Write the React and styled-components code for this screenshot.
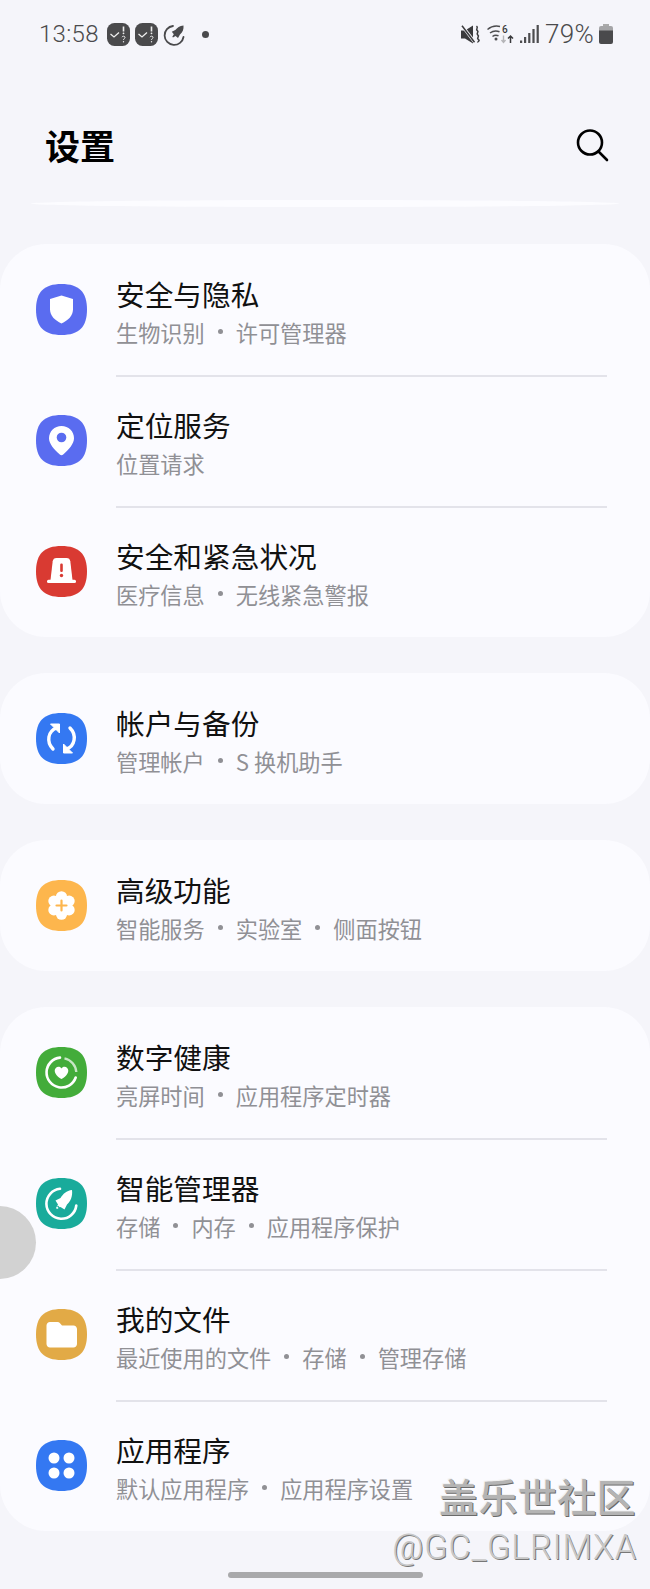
import React from 'react';
import styled, { createGlobalStyle } from 'styled-components';

const GlobalStyle = createGlobalStyle`
  html, body {
    margin: 0;
    padding: 0;
    background: #f5f5fa;
  }
`;

const CJK = `"Noto Sans CJK SC", "Noto Sans", sans-serif`;

const Screen = styled.div`
  position: relative;
  width: 650px;
  height: 1589px;
  overflow: hidden;
  background: #f5f5fa;
  font-family: ${CJK};
`;

const StatusBar = styled.div`
  height: 68px;
  display: flex;
  align-items: center;
  justify-content: space-between;
  padding: 0 37px 0 39px;
  box-sizing: border-box;
  color: #4a4a4c;
  font-family: Roboto, sans-serif;
`;

const StatusGroup = styled.div`
  display: flex;
  align-items: center;
  gap: ${(p) => p.$gap}px;
`;

const StatusText = styled.span`
  font-size: ${(p) => p.$size}px;
  font-weight: 300;
  letter-spacing: 0.3px;
  line-height: 28px;
  margin-right: ${(p) => p.$after || 0}px;
`;

const NotifyDot = styled.span`
  width: 7px;
  height: 7px;
  margin-left: 11px;
  border-radius: 50%;
  background: #4a4a4c;
`;

const Header = styled.header`
  height: 108px;
  display: flex;
  align-items: center;
  justify-content: space-between;
  padding: 46px 41px 0 45px;
  box-sizing: border-box;
`;

const PageTitle = styled.h1`
  margin: 0;
  font-size: 35px;
  font-weight: 700;
  line-height: 42px;
  color: #000;
`;

const CollapsedEdge = styled.div`
  height: 7px;
  margin: 24px 31px 37px;
  border-radius: 50%;
  background: #fcfcff;
`;

const CardStack = styled.main`
  display: flex;
  flex-direction: column;
  gap: 36px;
`;

const Card = styled.section`
  background: #fbfbff;
  border-radius: 46px;
`;

const Row = styled.div`
  position: relative;
  height: 131px;
  display: flex;
  align-items: center;
  padding-left: 36px;
  box-sizing: border-box;

  & + &::before {
    content: '';
    position: absolute;
    top: 0;
    left: 116px;
    right: 43px;
    height: 2px;
    background: #e3e3ea;
  }
`;

const IconBox = styled.svg`
  width: 51px;
  height: 51px;
  flex: none;
  margin-right: 29px;
`;

const RowText = styled.div`
  display: flex;
  flex-direction: column;
  padding-top: 2px;
`;

const Title = styled.div`
  font-size: 28.7px;
  line-height: 38px;
  color: #111;
`;

const Sub = styled.div`
  display: flex;
  align-items: center;
  margin-top: 4px;
  font-size: 22.2px;
  line-height: 30px;
  color: #909095;
`;

const Dot = styled.span`
  width: 5px;
  height: 5px;
  margin: 0 13px;
  border-radius: 50%;
  background: #909095;
`;

const AssistButton = styled.div`
  position: absolute;
  left: -37px;
  top: 1206px;
  width: 73px;
  height: 73px;
  border-radius: 50%;
  background: #d2d2d2;
`;

const HomeBar = styled.div`
  position: absolute;
  left: 228px;
  bottom: 11px;
  width: 195px;
  height: 6px;
  border-radius: 3px;
  background: #a9a9ab;
`;

const WatermarkCn = styled.div`
  position: absolute;
  right: 14px;
  top: 1472px;
  font-size: 39px;
  font-weight: 500;
  line-height: 46px;
  letter-spacing: 0.4px;
  color: #b4b4b4;
  text-shadow: 1px 1px 0 #6a6a6a, -1px -1px 0 #f2f2f2;
`;

const WatermarkId = styled.div`
  position: absolute;
  right: 13px;
  top: 1527px;
  font-family: Roboto, sans-serif;
  font-size: 34.2px;
  font-weight: 300;
  line-height: 40px;
  letter-spacing: 0.8px;
  color: #c8c8c8;
  text-shadow: 1px 1px 0 #777;
`;

const Squircle = ({ color }) => (
  <path
    d="M25.500 0C43 0 51 8 51 25.500S43 51 25.500 51 0 43 0 25.500 8 0 25.500 0Z"
    fill={color}
  />
);

const Glyph = ({ color, children }) => (
  <IconBox viewBox="0 0 51 51">
    <Squircle color={color} />
    {children}
  </IconBox>
);

const ShieldIcon = () => (
  <Glyph color="#5a6cf0">
    <path d="M25.500 11.500l11.500 3.600v10.200c0 6.600-4.800 11-11.500 14.200C18.800 36.300 14 31.900 14 25.300V15.100Z" fill="#fff" />
  </Glyph>
);

const PinIcon = () => (
  <Glyph color="#5a6cf0">
    <path d="M25.500 11C18.500 11 13 16.300 13 23.200c0 5.300 4.800 11 10.800 16.400 1 .9 2.400.9 3.400 0C33.200 34.200 38 28.500 38 23.200 38 16.300 32.500 11 25.500 11Z" fill="#fff" />
    <circle cx="25.500" cy="22.500" r="4.800" fill="#5a6cf0" />
  </Glyph>
);

const AlertIcon = () => (
  <Glyph color="#d93a32">
    <path d="M20.500 12h10c2.200 0 3.500 1.200 3.800 3.300L36.500 34h-22l2.200-18.700C17 13.200 18.300 12 20.500 12Z" fill="#fff" />
    <rect x="11" y="33.800" width="29" height="3.200" rx="1.500" fill="#fff" />
    <rect x="24.200" y="17.500" width="2.600" height="8.500" rx="1.200" fill="#d93a32" />
    <circle cx="25.500" cy="29.500" r="1.700" fill="#d93a32" />
  </Glyph>
);

const SyncIcon = () => (
  <Glyph color="#3478f2">
    <g fill="none" stroke="#fff" strokeWidth="3.400" strokeLinecap="round">
      <path d="M20.500 15C12 18 10 29 17 36" />
      <path d="M30.500 36C39 33 41 22 34 15" />
    </g>
    <path d="M14.500 11h9v9Z" fill="#fff" stroke="#fff" strokeLinejoin="round" />
    <path d="M36.500 40h-9v-9Z" fill="#fff" stroke="#fff" strokeLinejoin="round" />
  </Glyph>
);

const GearPlusIcon = () => (
  <Glyph color="#fdb64d">
    <g fill="#fff">
      <circle cx="25.500" cy="25.500" r="9" />
      <circle cx="25.500" cy="16.800" r="5.600" />
      <circle cx="25.500" cy="34.200" r="5.600" />
      <circle cx="17.900" cy="21.100" r="5.600" />
      <circle cx="33.100" cy="21.100" r="5.600" />
      <circle cx="17.900" cy="29.900" r="5.600" />
      <circle cx="33.100" cy="29.900" r="5.600" />
    </g>
    <path d="M25.500 20.500v10M20.500 25.500h10" stroke="#fdb64d" strokeWidth="2.200" strokeLinecap="round" />
  </Glyph>
);

const HeartRingIcon = () => (
  <Glyph color="#43ac3a">
    <path d="M28.500 11.300A15 15 0 0 1 40.300 25" fill="none" stroke="#fff" strokeWidth="2.400" opacity="0.7" />
    <path d="M39.700 30.500A15 15 0 1 1 24 10.600" fill="none" stroke="#fff" strokeWidth="2.600" strokeLinecap="round" />
    <path d="M25.500 32c-.8 0-6.800-4.100-6.800-8.300 0-2.300 1.700-4 3.800-4 1.300 0 2.400.7 3 1.700.6-1 1.700-1.700 3-1.700 2.100 0 3.800 1.700 3.800 4 0 4.200-6 8.300-6.800 8.300Z" fill="#fff" />
  </Glyph>
);

const RocketIcon = () => (
  <Glyph color="#19ab9b">
    <path d="M24 10.800A15 15 0 1 0 40.300 27.500" fill="none" stroke="#fff" strokeWidth="2.600" strokeLinecap="round" />
    <path d="M36 12c.8 6-1.400 11.500-5 14.500l-2.500 5-4-2.500-3.500 2-1-1 2-3.500-2.500-4 5-2.500C27 16 30.500 12.500 36 12Z" fill="#fff" />
    <path d="M21.500 28l2.500 2.500" stroke="#19ab9b" strokeWidth="1.200" />
  </Glyph>
);

const FolderIcon = () => (
  <Glyph color="#e2aa46">
    <path d="M14 13h7.500c1 0 1.700.4 2.300 1.100L26 16.500h11.500c1.900 0 3.500 1.600 3.500 3.500v15c0 1.900-1.600 3.500-3.500 3.500H14c-1.900 0-3.500-1.600-3.500-3.500V16.500c0-1.900 1.600-3.500 3.500-3.500Z" fill="#fff" />
  </Glyph>
);

const AppsIcon = () => (
  <Glyph color="#3478f2">
    <g fill="#fff">
      <circle cx="18" cy="18" r="5.500" />
      <circle cx="33" cy="18" r="5.500" />
      <circle cx="18" cy="33" r="5.500" />
      <circle cx="33" cy="33" r="5.500" />
    </g>
  </Glyph>
);

const TaskBadge = () => (
  <svg width="23" height="23" viewBox="0 0 23 23">
    <rect width="23" height="23" rx="7.500" fill="#4a4a4c" />
    <path d="M3.500 11l3.500 3 5-4.500" fill="none" stroke="#eee" strokeWidth="1.300" />
    <path d="M16.500 3.500v5" stroke="#eee" strokeWidth="1.600" />
    <circle cx="16.500" cy="10.300" r=".9" fill="#eee" />
    <path d="M15 14.200c.3-1.400 3-1.400 3 .2 0 1.200-1.500 1.100-1.500 2.600" fill="none" stroke="#eee" strokeWidth="1" />
    <circle cx="16.500" cy="18.800" r=".7" fill="#eee" />
  </svg>
);

const RocketStatus = () => (
  <svg width="23" height="23" viewBox="0 0 23 23">
    <path d="M10 3A9.500 9.500 0 1 0 20.500 14" fill="none" stroke="#4a4a4c" strokeWidth="1.800" strokeLinecap="round" />
    <path d="M20.500 2.500c.4 4-1 7-3.500 9L15 15l-2.500-2-2.500 1.500-.7-.7 1.500-2.500-2-2.500 3.500-1.800c2-2 4.200-4.300 8.200-4.500Z" fill="#4a4a4c" />
  </svg>
);

const MuteIcon = () => (
  <svg width="20" height="19" viewBox="0 0 20 19">
    <path d="M0 5.500h4l8-5v18l-8-5H0Z" fill="#3a3a3c" />
    <path d="M1 .5l12.500 16.500" stroke="#f5f5fa" strokeWidth="3" />
    <path d="M1 .8l12.500 16.500" stroke="#3a3a3c" strokeWidth="1.500" />
    <path d="M15.500 1c2.500 2-1.500 3 .8 4.500s-1.800 3 .5 4.500-1.800 3 .5 4.500-1 2-.5 3" fill="none" stroke="#3a3a3c" strokeWidth="1.500" />
  </svg>
);

const WifiIcon = () => (
  <svg width="27" height="20" viewBox="0 0 27 20">
    <g fill="none" stroke="#4d4d4f" strokeWidth="1.500">
      <path d="M0.500 5.500C4 2.500 8.500 1.500 13 2.500" />
      <path d="M3 9c2.700-2 6.500-2.500 9.500-1.200" />
      <path d="M5.500 12.500c1.500-1.200 4-1.500 6-.7" />
    </g>
    <circle cx="9" cy="15" r="1.500" fill="#4d4d4f" />
    <text x="15" y="8.500" fontSize="10" fontWeight="500" fontFamily="Roboto, sans-serif" fill="#3a3a3c">6</text>
    <path d="M16.500 11.500v7M14.500 16l2 2.500 2-2.500" fill="none" stroke="#b5b5b8" strokeWidth="1.400" />
    <path d="M23.500 19v-7M21 14.500l2.500-2.500 2.500 2.500" fill="none" stroke="#3a3a3c" strokeWidth="1.500" />
  </svg>
);

const SignalIcon = () => (
  <svg width="19" height="18" viewBox="0 0 19 18">
    <g fill="#4d4d4f">
      <rect x="0" y="15.500" width="2.200" height="2.500" />
      <rect x="4" y="12" width="2.200" height="6" />
      <rect x="8.200" y="8" width="2.200" height="10" />
      <rect x="12.400" y="4" width="2.200" height="14" />
      <rect x="16.600" y="0" width="2.200" height="18" />
    </g>
  </svg>
);

const BatteryIcon = () => (
  <svg width="14" height="20" viewBox="0 0 14 20">
    <path d="M4 0h6v2H4Z" fill="#aaa" />
    <path d="M2 2h10a2 2 0 0 1 2 2v3H0V4a2 2 0 0 1 2-2Z" fill="#a5a5a7" />
    <path d="M0 6.500h14V18a2 2 0 0 1-2 2H2a2 2 0 0 1-2-2Z" fill="#4a4a4c" />
  </svg>
);

const SearchIcon = () => (
  <svg width="34" height="34" viewBox="0 0 34 34" fill="none" stroke="#000" strokeWidth="2.600">
    <circle cx="15" cy="14.500" r="12" />
    <path d="M23.500 23.500L32 32" strokeLinecap="round" />
  </svg>
);

const groups = [
  [
    { icon: ShieldIcon, title: '安全与隐私', sub: ['生物识别', '许可管理器'] },
    { icon: PinIcon, title: '定位服务', sub: ['位置请求'] },
    { icon: AlertIcon, title: '安全和紧急状况', sub: ['医疗信息', '无线紧急警报'] },
  ],
  [{ icon: SyncIcon, title: '帐户与备份', sub: ['管理帐户', 'S 换机助手'] }],
  [{ icon: GearPlusIcon, title: '高级功能', sub: ['智能服务', '实验室', '侧面按钮'] }],
  [
    { icon: HeartRingIcon, title: '数字健康', sub: ['亮屏时间', '应用程序定时器'] },
    { icon: RocketIcon, title: '智能管理器', sub: ['存储', '内存', '应用程序保护'] },
    { icon: FolderIcon, title: '我的文件', sub: ['最近使用的文件', '存储', '管理存储'] },
    { icon: AppsIcon, title: '应用程序', sub: ['默认应用程序', '应用程序设置'] },
  ],
];

function SettingRow({ icon: Icon, title, sub }) {
  return (
    <Row>
      <Icon />
      <RowText>
        <Title>{title}</Title>
        <Sub>
          {sub.map((part, i) => (
            <React.Fragment key={part}>
              {i > 0 && <Dot />}
              <span>{part}</span>
            </React.Fragment>
          ))}
        </Sub>
      </RowText>
    </Row>
  );
}

export default function App() {
  return (
    <Screen>
      <GlobalStyle />
      <StatusBar>
        <StatusGroup $gap={5}>
          <StatusText $size={24} $after={3}>13:58</StatusText>
          <TaskBadge />
          <TaskBadge />
          <RocketStatus />
          <NotifyDot />
        </StatusGroup>
        <StatusGroup $gap={6}>
          <MuteIcon />
          <WifiIcon />
          <SignalIcon />
          <StatusText $size={26} $after={-1}>79%</StatusText>
          <BatteryIcon />
        </StatusGroup>
      </StatusBar>
      <Header>
        <PageTitle>设置</PageTitle>
        <SearchIcon />
      </Header>
      <CollapsedEdge />
      <CardStack>
        {groups.map((rows) => (
          <Card key={rows[0].title}>
            {rows.map((row) => (
              <SettingRow key={row.title} {...row} />
            ))}
          </Card>
        ))}
      </CardStack>
      <AssistButton />
      <WatermarkCn>盖乐世社区</WatermarkCn>
      <WatermarkId>@GC_GLRIMXA</WatermarkId>
      <HomeBar />
    </Screen>
  );
}
